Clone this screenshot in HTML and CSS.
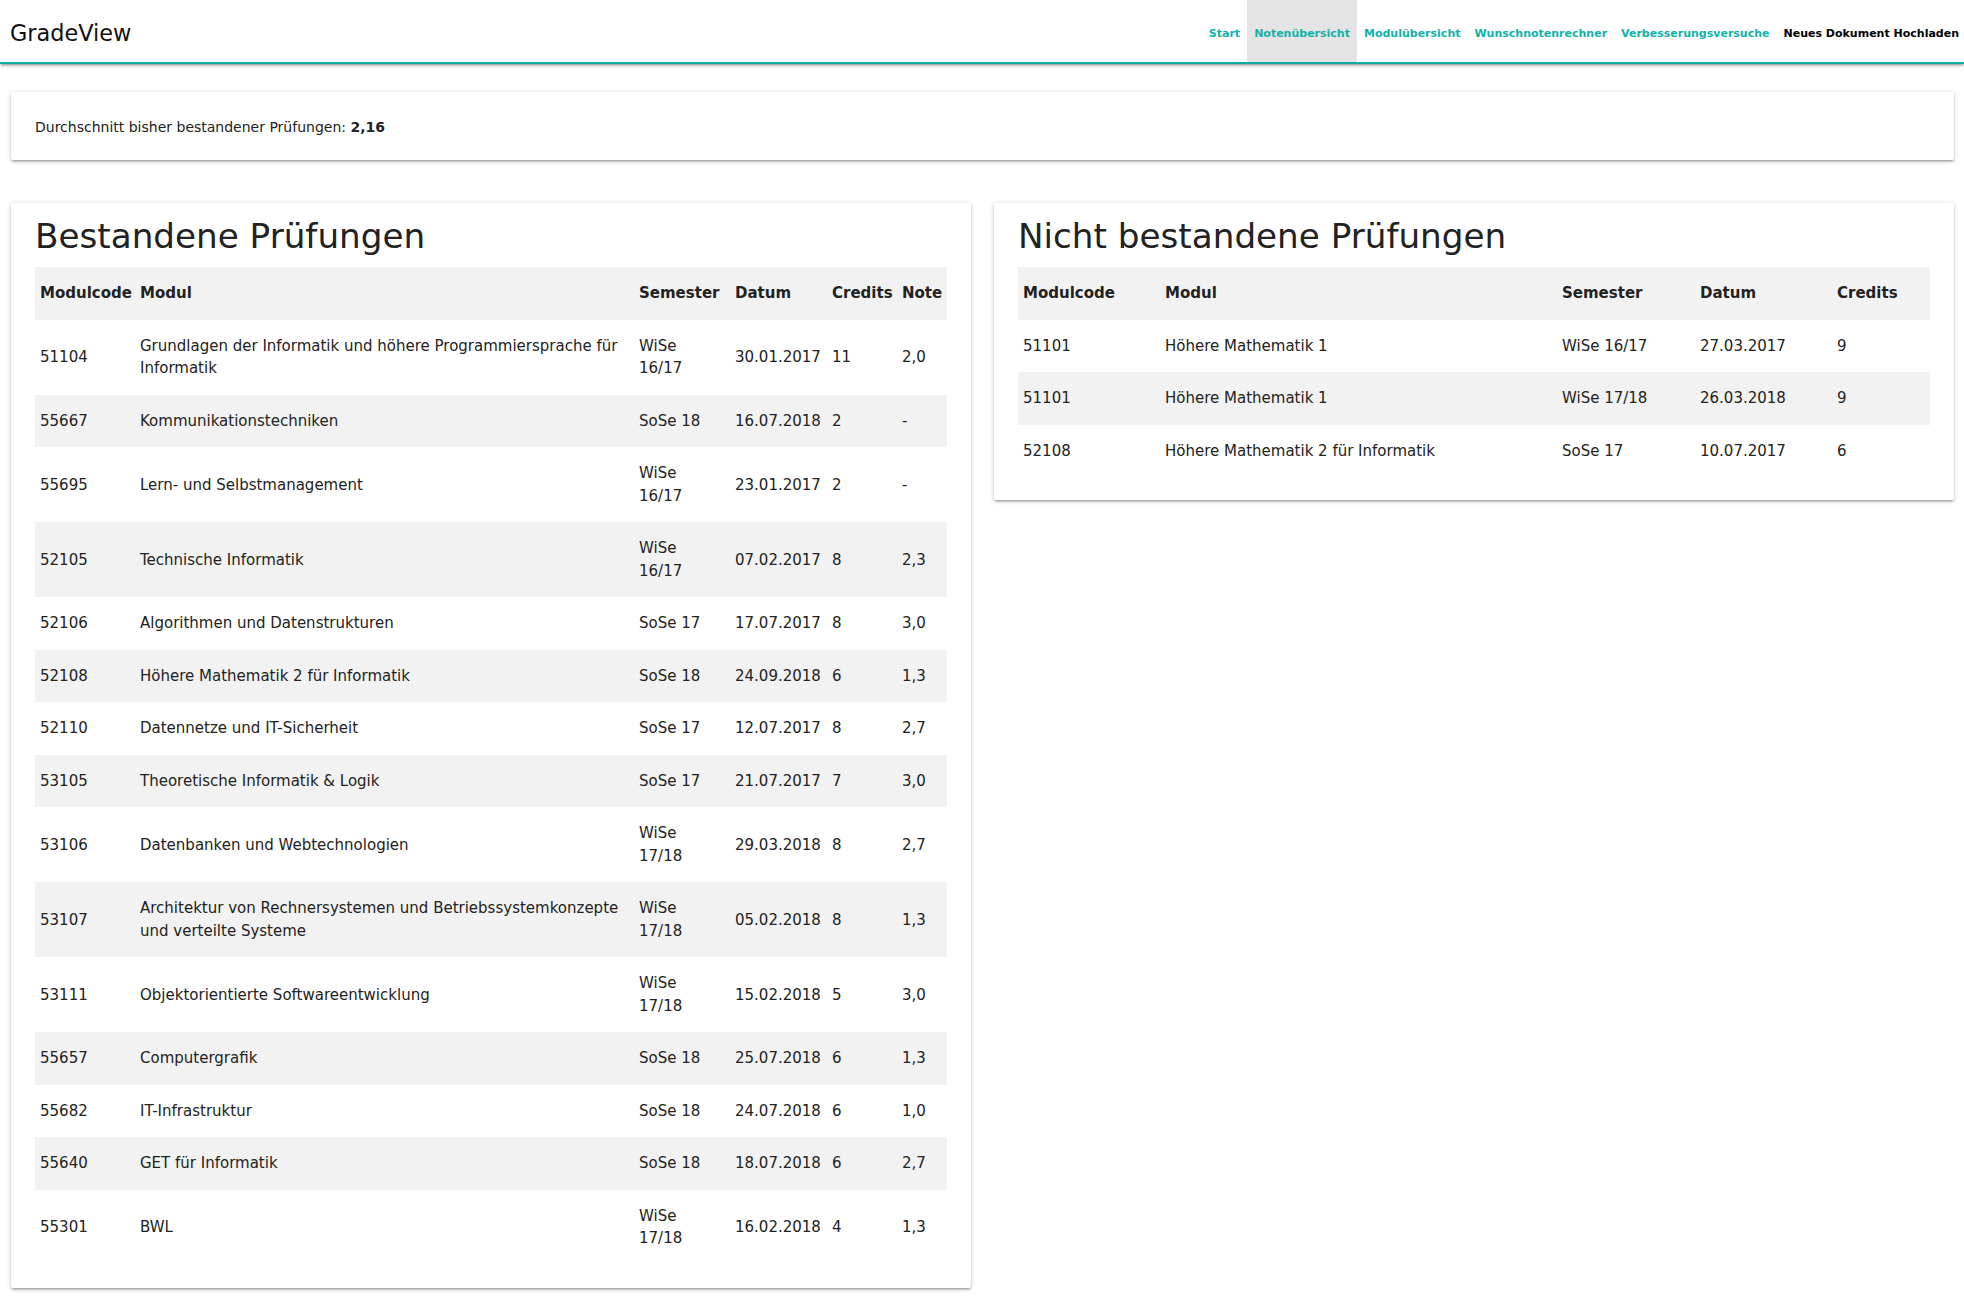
FILE: index.html
```html
<!DOCTYPE html>
<html lang="de">
<head>
<meta charset="utf-8">
<title>GradeView</title>
<link rel="stylesheet" href="styles.css">
</head>
<body>
<header class="nav">
  <a class="brand" href="#">GradeView</a>
  <ul class="menu">
    <li><a class="link" href="#">Start</a></li>
    <li class="active"><a class="link" href="#">Notenübersicht</a></li>
    <li><a class="link" href="#">Modulübersicht</a></li>
    <li><a class="link" href="#">Wunschnotenrechner</a></li>
    <li><a class="link" href="#">Verbesserungsversuche</a></li>
    <li><a class="link dark" href="#">Neues Dokument Hochladen</a></li>
  </ul>
</header>

<main class="content">
  <section class="card summary">
    Durchschnitt bisher bestandener Prüfungen: <b>2,16</b>
  </section>

  <div class="columns">
    <section class="card panel">
      <h4 class="title">Bestandene Prüfungen</h4>
      <table class="grades passed">
        <thead>
          <tr>
            <th class="c-code">Modulcode</th>
            <th class="c-mod">Modul</th>
            <th class="c-sem">Semester</th>
            <th class="c-date">Datum</th>
            <th class="c-cred">Credits</th>
            <th class="c-note">Note</th>
          </tr>
        </thead>
        <tbody>
          <tr><td>51104</td><td>Grundlagen der Informatik und höhere Programmiersprache für Informatik</td><td>WiSe 16/17</td><td>30.01.2017</td><td>11</td><td>2,0</td></tr>
          <tr><td>55667</td><td>Kommunikationstechniken</td><td>SoSe 18</td><td>16.07.2018</td><td>2</td><td>-</td></tr>
          <tr><td>55695</td><td>Lern- und Selbstmanagement</td><td>WiSe 16/17</td><td>23.01.2017</td><td>2</td><td>-</td></tr>
          <tr><td>52105</td><td>Technische Informatik</td><td>WiSe 16/17</td><td>07.02.2017</td><td>8</td><td>2,3</td></tr>
          <tr><td>52106</td><td>Algorithmen und Datenstrukturen</td><td>SoSe 17</td><td>17.07.2017</td><td>8</td><td>3,0</td></tr>
          <tr><td>52108</td><td>Höhere Mathematik 2 für Informatik</td><td>SoSe 18</td><td>24.09.2018</td><td>6</td><td>1,3</td></tr>
          <tr><td>52110</td><td>Datennetze und IT-Sicherheit</td><td>SoSe 17</td><td>12.07.2017</td><td>8</td><td>2,7</td></tr>
          <tr><td>53105</td><td>Theoretische Informatik &amp; Logik</td><td>SoSe 17</td><td>21.07.2017</td><td>7</td><td>3,0</td></tr>
          <tr><td>53106</td><td>Datenbanken und Webtechnologien</td><td>WiSe 17/18</td><td>29.03.2018</td><td>8</td><td>2,7</td></tr>
          <tr><td>53107</td><td>Architektur von Rechnersystemen und Betriebssystemkonzepte und verteilte Systeme</td><td>WiSe 17/18</td><td>05.02.2018</td><td>8</td><td>1,3</td></tr>
          <tr><td>53111</td><td>Objektorientierte Softwareentwicklung</td><td>WiSe 17/18</td><td>15.02.2018</td><td>5</td><td>3,0</td></tr>
          <tr><td>55657</td><td>Computergrafik</td><td>SoSe 18</td><td>25.07.2018</td><td>6</td><td>1,3</td></tr>
          <tr><td>55682</td><td>IT-Infrastruktur</td><td>SoSe 18</td><td>24.07.2018</td><td>6</td><td>1,0</td></tr>
          <tr><td>55640</td><td>GET für Informatik</td><td>SoSe 18</td><td>18.07.2018</td><td>6</td><td>2,7</td></tr>
          <tr><td>55301</td><td>BWL</td><td>WiSe 17/18</td><td>16.02.2018</td><td>4</td><td>1,3</td></tr>
        </tbody>
      </table>
    </section>

    <section class="card panel">
      <h4 class="title">Nicht bestandene Prüfungen</h4>
      <table class="grades failed">
        <thead>
          <tr>
            <th class="c-code">Modulcode</th>
            <th class="c-mod">Modul</th>
            <th class="c-sem">Semester</th>
            <th class="c-date">Datum</th>
            <th class="c-cred">Credits</th>
          </tr>
        </thead>
        <tbody>
          <tr><td>51101</td><td>Höhere Mathematik 1</td><td>WiSe 16/17</td><td>27.03.2017</td><td>9</td></tr>
          <tr><td>51101</td><td>Höhere Mathematik 1</td><td>WiSe 17/18</td><td>26.03.2018</td><td>9</td></tr>
          <tr><td>52108</td><td>Höhere Mathematik 2 für Informatik</td><td>SoSe 17</td><td>10.07.2017</td><td>6</td></tr>
        </tbody>
      </table>
    </section>
  </div>
</main>
</body>
</html>
```

FILE: styles.css
```css
* { box-sizing: border-box; }

html, body {
  margin: 0;
  padding: 0;
  background: #ffffff;
  font-family: "DejaVu Sans", Verdana, sans-serif;
  color: rgba(0, 0, 0, 0.87);
}

.nav {
  display: flex;
  align-items: stretch;
  justify-content: space-between;
  height: 64px;
  background: #ffffff;
  border-bottom: 2px solid #14aaa3;
  box-shadow: 0 2px 2px 0 rgba(0,0,0,0.14), 0 3px 1px -2px rgba(0,0,0,0.12), 0 1px 5px 0 rgba(0,0,0,0.2);
  position: relative;
  z-index: 2;
}

.brand {
  display: flex;
  align-items: center;
  padding: 3px 0 0 10px;
  font-size: 22.4px;
  color: #111;
  text-decoration: none;
}

.menu {
  display: flex;
  margin: 0;
  padding: 0;
  list-style: none;
}

.menu li {
  display: flex;
}

.menu li.active {
  background: #e4e4e4;
}

.link {
  display: flex;
  align-items: center;
  padding: 4px 7px 0;
  font-size: 11px;
  font-weight: bold;
  color: #0fb3a9;
  text-decoration: none;
}

.link.dark {
  color: #000;
  padding-right: 5px;
}

.content {
  padding: 28px 10px 19px 11px;
}

.card {
  background: #fff;
  border-radius: 2px;
  box-shadow: 0 2px 2px 0 rgba(0,0,0,0.14), 0 3px 1px -2px rgba(0,0,0,0.12), 0 1px 5px 0 rgba(0,0,0,0.2);
}

.summary {
  padding: 26px 24px 23px;
  font-size: 14px;
  line-height: 19px;
  color: #222;
}

.columns {
  display: grid;
  grid-template-columns: 1fr 1fr;
  column-gap: 23px;
  align-items: start;
  margin-top: 43px;
}

.panel {
  padding: 15px 24px 23px;
}

.title {
  margin: 0 0 11.7px;
  font-size: 34.2px;
  font-weight: normal;
  line-height: 37.6px;
  color: #222;
}

.grades {
  width: 100%;
  border-collapse: collapse;
  table-layout: fixed;
  font-size: 15px;
  line-height: 22.5px;
  color: #222;
}

.grades th,
.grades td {
  padding: 15px 5px;
  text-align: left;
  vertical-align: middle;
}

.grades th {
  font-weight: bold;
}

.grades thead tr,
.grades tbody tr:nth-child(even) {
  background: #f2f2f2;
}

.passed td:nth-child(3) {
  padding-right: 12px;
}

.passed .c-code { width: 100px; }
.passed .c-sem { width: 96px; }
.passed .c-date { width: 97px; }
.passed .c-cred { width: 70px; }
.passed .c-note { width: 50px; }

.failed .c-code { width: 142px; }
.failed .c-sem { width: 138px; }
.failed .c-date { width: 137px; }
.failed .c-cred { width: 98px; }
```
